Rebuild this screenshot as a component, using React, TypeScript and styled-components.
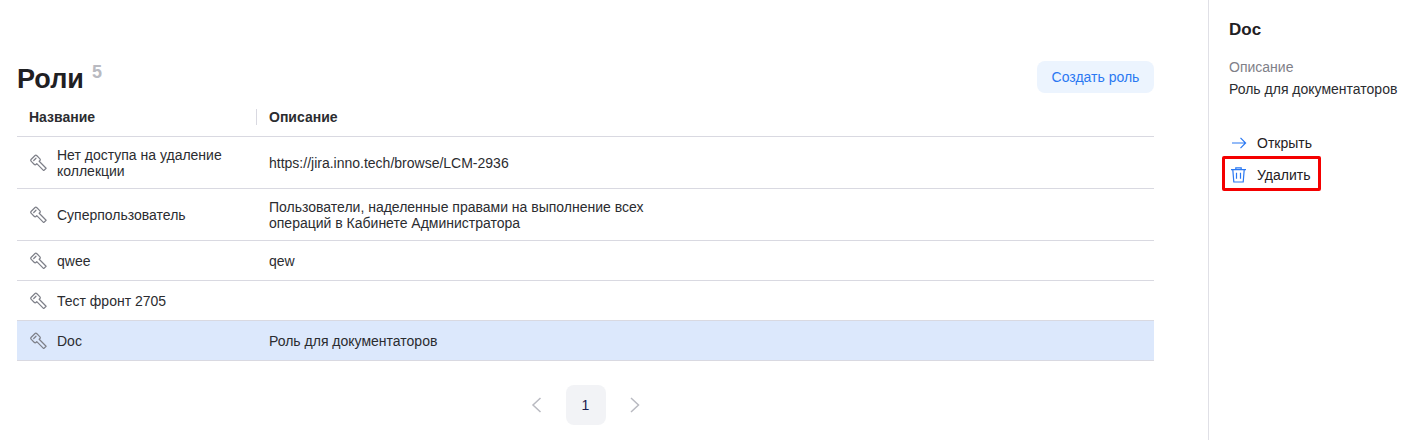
import React from "react";
import styled, { createGlobalStyle } from "styled-components";

const Global = createGlobalStyle`
  html, body { margin: 0; padding: 0; background: #fff; }
  body { font-family: "Liberation Sans", Arial, sans-serif; color: #1f2023; font-size: 14px; }
`;

const Page = styled.div`
  display: flex;
  width: 1406px;
  height: 440px;
  overflow: hidden;
`;
const Main = styled.main`
  width: 1137px;
  margin-left: 17px;
  padding-top: 61px;
`;
const Spacer = styled.div`
  width: 54px;
`;
const Header = styled.header`
  display: flex;
  justify-content: space-between;
  align-items: flex-start;
  height: 36px;
`;
const Title = styled.h1`
  margin: 0;
  display: flex;
  font-size: 27px;
  line-height: 36px;
  font-weight: 700;
  color: #1f2023;
`;
const Count = styled.sup`
  font-size: 18px;
  line-height: 22px;
  font-weight: 700;
  color: #b9bac1;
  margin-left: 8px;
  margin-top: 0;
  vertical-align: baseline;
`;
const CreateButton = styled.button`
  height: 32px;
  width: 117px;
  border: 0;
  border-radius: 8px;
  background: #ecf4fe;
  color: #2a78f2;
  font: 14px/32px "Liberation Sans", Arial, sans-serif;
  padding: 0;
`;
const Table = styled.div`
  display: flex;
  flex-direction: column;
`;
const HeadRow = styled.div`
  display: grid;
  grid-template-columns: 239px 1fr;
  height: 39px;
  align-items: center;
  border-bottom: 1px solid #d9d9e1;
`;
const HeadCell = styled.div<{ $divider?: boolean }>`
  font-weight: 700;
  font-size: 14px;
  line-height: 16px;
  color: #2b2c30;
  padding-left: 12px;
  border-left: ${(p) => (p.$divider ? "1px solid #d9d9e1" : "0")};
`;
const Row = styled.div<{ $h: number; $selected?: boolean }>`
  display: grid;
  grid-template-columns: 240px 1fr;
  height: ${(p) => p.$h}px;
  box-sizing: content-box;
  align-items: center;
  border-bottom: 1px solid #d9d9e1;
  background: ${(p) => (p.$selected ? "#dce8fc" : "transparent")};
  font-size: 14px;
  line-height: 16px;
  color: #2b2c30;
`;
const NameCell = styled.div`
  display: flex;
  align-items: center;
  padding-left: 13px;
  gap: 10px;
`;
const NameText = styled.div`
  width: 180px;
`;
const DescCell = styled.div`
  padding-left: 12px;
  width: 400px;
`;
const KeyGlyph = styled.svg`
  width: 17px;
  height: 17px;
  flex: none;
  color: #7d7f88;
`;
const Pager = styled.nav`
  display: flex;
  justify-content: center;
  align-items: center;
  margin-top: 24px;
  gap: 18px;
`;
const PageArrow = styled.span`
  display: flex;
  width: 22px;
  height: 22px;
  align-items: center;
  justify-content: center;
  color: #b9bac1;
`;
const PageNum = styled.span`
  width: 40px;
  height: 40px;
  border-radius: 8px;
  background: #f2f3f6;
  display: flex;
  align-items: center;
  justify-content: center;
  font-size: 14px;
  color: #1b2050;
`;
const Side = styled.aside`
  flex: 1;
  border-left: 1px solid #e0e0e6;
  padding: 20px 0 0 20px;
`;
const SideTitle = styled.h2`
  margin: 0;
  font-size: 17px;
  line-height: 20px;
  font-weight: 700;
  color: #1f2023;
`;
const SideLabel = styled.div`
  margin-top: 16px;
  font-size: 14px;
  line-height: 22px;
  color: #7f8088;
`;
const SideValue = styled.div`
  font-size: 14px;
  line-height: 22px;
  color: #2b2c30;
  white-space: nowrap;
`;
const Actions = styled.div`
  display: flex;
  flex-direction: column;
  margin-top: 27px;
`;
const Action = styled.div`
  position: relative;
  display: flex;
  align-items: center;
  height: 32px;
  gap: 10px;
  font-size: 14px;
  color: #1f2023;
`;
const Highlight = styled.span`
  position: absolute;
  left: -7px;
  top: -3px;
  width: 93px;
  height: 29px;
  border: 3px solid #f40000;
  border-radius: 2px;
`;
const ActionIcon = styled.svg`
  width: 18px;
  height: 18px;
  flex: none;
  color: #2a78f2;
`;

const Key = () => (
  <KeyGlyph viewBox="0 0 17 17" fill="none" stroke="currentColor" strokeWidth="1.2" strokeLinejoin="round" strokeLinecap="round">
    <g transform="rotate(45 5.5 6)">
      <path d="M3.5 2H7.5Q9 2 9 3.5V4.3H18.8V7.7H9V8.5Q9 10 7.5 10H3.5Q2 10 2 8.5V3.5Q2 2 3.5 2Z" />
      <path d="M4.6 4.4V7.6" />
    </g>
  </KeyGlyph>
);

const rows: { name: React.ReactNode; desc: React.ReactNode; h: number; selected?: boolean }[] = [
  { name: "Нет доступа на удаление коллекции", desc: "https://jira.inno.tech/browse/LCM-2936", h: 51 },
  { name: "Суперпользователь", desc: "Пользователи, наделенные правами на выполнение всех операций в Кабинете Администратора", h: 51 },
  { name: "qwee", desc: "qew", h: 39 },
  { name: "Тест фронт 2705", desc: "", h: 39 },
  { name: "Doc", desc: "Роль для документаторов", h: 39, selected: true },
];

export default function App() {
  return (
    <Page>
      <Global />
      <Main>
        <Header>
          <Title>
            Роли<Count>5</Count>
          </Title>
          <CreateButton>Создать роль</CreateButton>
        </Header>
        <Table>
          <HeadRow>
            <HeadCell>Название</HeadCell>
            <HeadCell $divider>Описание</HeadCell>
          </HeadRow>
          {rows.map((r, i) => (
            <Row key={i} $h={r.h} $selected={r.selected}>
              <NameCell>
                <Key />
                <NameText>{r.name}</NameText>
              </NameCell>
              <DescCell>{r.desc}</DescCell>
            </Row>
          ))}
        </Table>
        <Pager>
          <PageArrow>
            <svg width="22" height="22" viewBox="0 0 22 22" fill="none" stroke="currentColor" strokeWidth="1.5">
              <path d="M14.5 4 7 11l7.5 7" />
            </svg>
          </PageArrow>
          <PageNum>1</PageNum>
          <PageArrow>
            <svg width="22" height="22" viewBox="0 0 22 22" fill="none" stroke="currentColor" strokeWidth="1.5">
              <path d="m7 4 7.5 7-7.5 7" />
            </svg>
          </PageArrow>
        </Pager>
      </Main>
      <Spacer />
      <Side>
        <SideTitle>Doc</SideTitle>
        <SideLabel>Описание</SideLabel>
        <SideValue>Роль для документаторов</SideValue>
        <Actions>
          <Action>
            <ActionIcon viewBox="0 0 18 18" fill="none" stroke="currentColor" strokeWidth="1.2">
              <path d="M3 9h13.5M11.5 3.8 16.6 9l-5.1 5.2" />
            </ActionIcon>
            Открыть
          </Action>
          <Action>
            <Highlight />
            <ActionIcon viewBox="0 0 18 18" fill="none" stroke="currentColor" strokeWidth="1.2">
              <path d="M2 3.6h15M6.8 3.6V1.8h5.4v1.8M3.8 3.6l1 12.4h9.4l1-12.4M7.5 6.8v6M11.5 6.8v6" />
            </ActionIcon>
            Удалить
          </Action>
        </Actions>
      </Side>
    </Page>
  );
}
